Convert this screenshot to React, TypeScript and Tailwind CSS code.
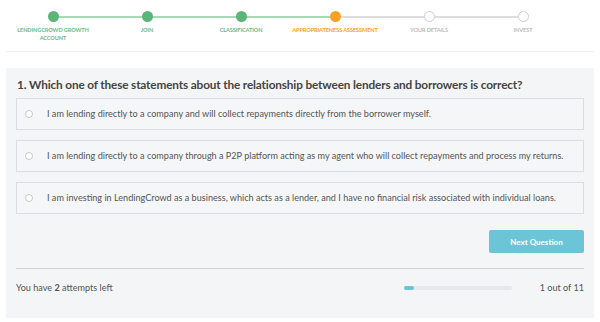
import React from "react";

const steps = [
  { label: ["LENDINGCROWD GROWTH", "ACCOUNT"], state: "done" },
  { label: ["JOIN"], state: "done" },
  { label: ["CLASSIFICATION"], state: "done" },
  { label: ["APPROPRIATENESS ASSESSMENT"], state: "current" },
  { label: ["YOUR DETAILS"], state: "todo" },
  { label: ["INVEST"], state: "todo" },
];

const options = [
  "I am lending directly to a company and will collect repayments directly from the borrower myself.",
  "I am lending directly to a company through a P2P platform acting as my agent who will collect repayments and process my returns.",
  "I am investing in LendingCrowd as a business, which acts as a lender, and I have no financial risk associated with individual loans.",
];

export default function App() {
  return (
    <div className="w-[600px] h-[322px] bg-white overflow-hidden" style={{ fontFamily: "Lato, 'Open Sans', sans-serif" }}>
      {/* Stepper */}
      <div className="relative h-[52px] border-b border-[#f0f0f0] mx-[6px]">
        <div className="absolute left-[47px] top-[16px] h-[2px] w-[282px] bg-[#a9d8b4]" />
        <div className="absolute left-[329px] top-[16px] h-[2px] w-[188px] bg-[#dddddd]" />
        <div className="flex pl-0 pt-[11px]">
          {steps.map((s, i) => (
            <div key={i} className="w-[94px] flex flex-col items-center relative">
              <div
                className={
                  s.state === "done"
                    ? "w-[11px] h-[11px] rounded-full bg-[#5bb576]"
                    : s.state === "current"
                    ? "w-[11px] h-[11px] rounded-full bg-[#f9a126]"
                    : "w-[11px] h-[11px] rounded-full bg-white border-[1.5px] border-[#cfcfcf]"
                }
              />
              <div
                className={
                  "mt-[4px] text-[5.6px] font-bold leading-[8px] text-center whitespace-nowrap tracking-[-0.1px] " +
                  (s.state === "done" ? "text-[#6db984]" : s.state === "current" ? "text-[#f9a126]" : "text-[#bdbdbd]")
                }
              >
                {s.label.map((l, j) => (
                  <div key={j}>{l}</div>
                ))}
              </div>
            </div>
          ))}
        </div>
      </div>

      {/* Panel */}
      <div className="mx-[6px] mt-[16px] h-[250px] bg-[#f4f5f7] px-[10px] pt-[8px]">
        <h1 className="text-[11.8px] font-bold text-[#444] leading-[18px] pl-[1px] whitespace-nowrap tracking-[-0.15px]">
          1. Which one of these statements about the relationship between lenders and borrowers is correct?
        </h1>
        <div className="mt-[4px] flex flex-col gap-[10px]">
          {options.map((o, i) => (
            <div key={i} className="h-[32px] border border-[#dcdde0] bg-[#f5f6f8] flex items-center pl-[8px]">
              <div className="w-[8px] h-[8px] rounded-full border border-[#c8c8c8] bg-white" />
              <span className="ml-[14px] text-[9.1px] text-[#555] whitespace-nowrap">{o}</span>
            </div>
          ))}
        </div>
        <div className="flex justify-end mt-[16px]">
          <button className="w-[95px] h-[23px] bg-[#6cc5d7] rounded-[2px] text-white text-[8px] font-bold">
            Next Question
          </button>
        </div>
        <div className="mt-[15px] border-t border-[#cfd0d2]" />
        <div className="flex items-center mt-[12px] text-[9.1px] text-[#555]">
          <div>
            You have <b className="font-bold">2</b> attempts left
          </div>
          <div className="ml-auto mr-[28px] w-[108px] shrink-0 h-[4px] bg-[#e6e8eb] rounded-full">
            <div className="w-[10px] h-[4px] bg-[#6cc5d7] rounded-full" />
          </div>
          <div>1 out of 11</div>
        </div>
      </div>
    </div>
  );
}
